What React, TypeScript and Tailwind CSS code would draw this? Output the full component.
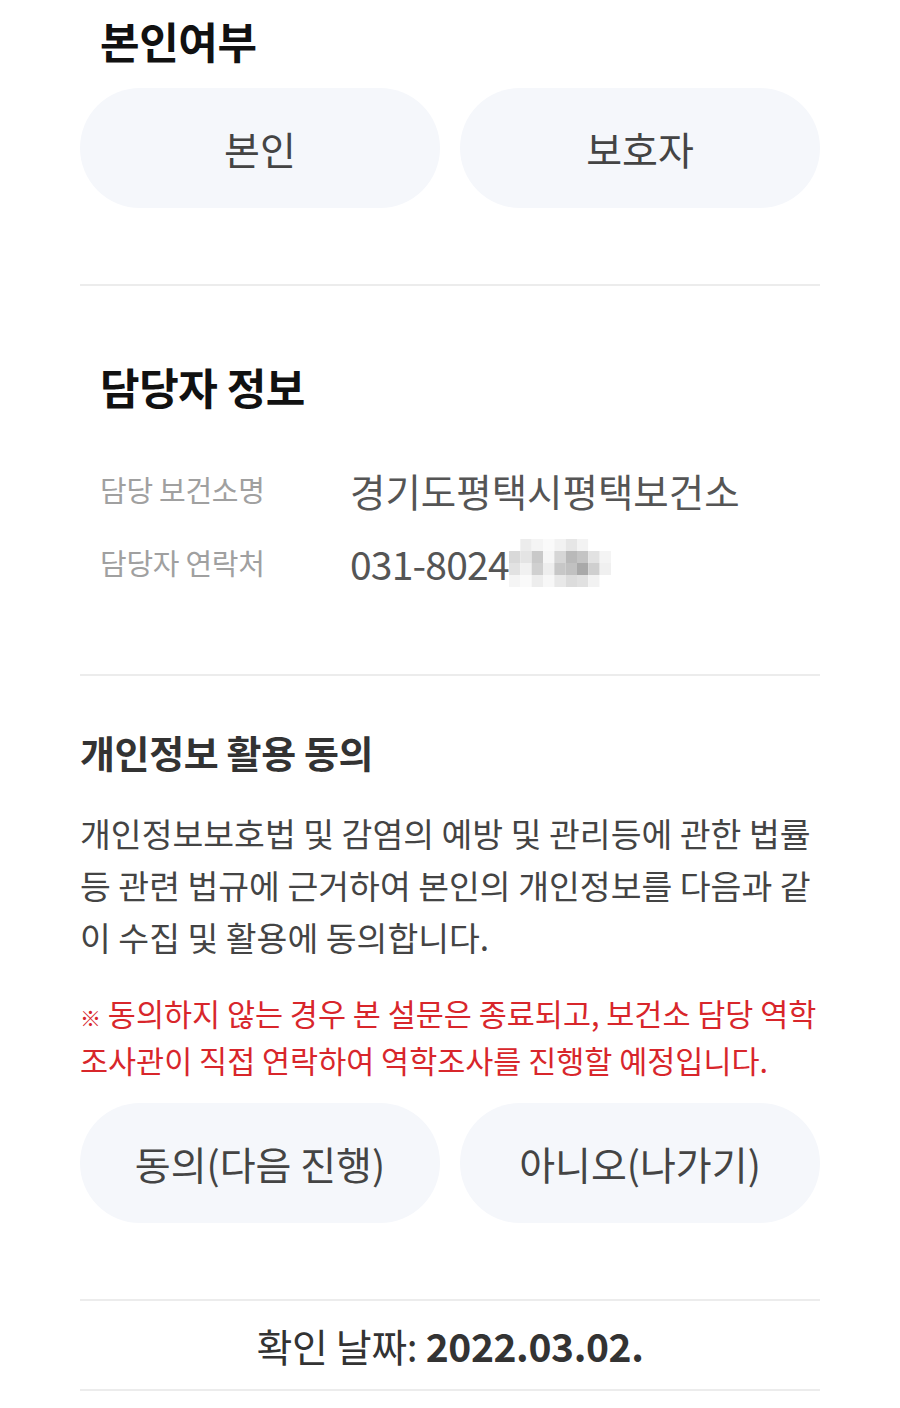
import React from 'react';

const font = { fontFamily: '"Noto Sans CJK KR", "Noto Sans", sans-serif' };

// pixelated mosaic that hides the last digits of the phone number
const mosaic: string[][] = [
  ['#ffffff', '#ececec', '#f4f4f4', '#fafafa', '#f2f2f2', '#e6e6e6', '#f3f3f3', '#ffffff', '#ffffff'],
  ['#d9d9d9', '#e4e4e4', '#c9c9c9', '#f6f6f6', '#d6d6d6', '#b9b9b9', '#c4c4c4', '#e2e2e2', '#f4f4f4'],
  ['#e2e2e2', '#f1f1f1', '#d0d0d0', '#eeeeee', '#c7c7c7', '#c1c1c1', '#a9a9a9', '#cfcfcf', '#f0f0f0'],
  ['#f5f5f5', '#fafafa', '#ededed', '#f7f7f7', '#e8e8e8', '#dcdcdc', '#e1e1e1', '#f2f2f2', '#ffffff'],
];

function Mosaic() {
  return (
    <svg width="102" height="48" viewBox="0 0 108 48" preserveAspectRatio="none">
      {mosaic.map((row, r) =>
        row.map((c, i) => <rect key={`${r}-${i}`} x={i * 12} y={r * 12} width="12" height="12" fill={c} />),
      )}
    </svg>
  );
}

function PillButton({ children }: { children: React.ReactNode }) {
  return (
    <button className="h-[120px] flex-1 rounded-full bg-[#f5f7fb] text-[39px] text-[#444444]">
      {children}
    </button>
  );
}

function Divider() {
  return <div className="h-[2px] w-full bg-[#ececec]" />;
}

export default function App() {
  return (
    <div className="min-h-screen bg-white px-[80px] pt-4" style={font}>
      <h2 className="pl-5 text-[43px] font-bold leading-[48px] tracking-[-0.01em] text-[#111111]">본인여부</h2>
      <div className="mt-6 flex gap-5">
        <PillButton>본인</PillButton>
        <PillButton>보호자</PillButton>
      </div>

      <div className="mt-[76px]">
        <Divider />
      </div>

      <h2 className="mt-[76px] pl-5 text-[43px] font-bold leading-[48px] tracking-[-0.01em] text-[#111111]">
        담당자 정보
      </h2>

      <div className="mt-[56px] flex flex-col gap-[25px] pl-5">
        <div className="flex items-center">
          <span className="w-[250px] text-[29px] tracking-[-0.01em] text-[#a0a0a0]">담당 보건소명</span>
          <span className="text-[38.5px] leading-[48px] text-[#555555]">경기도평택시평택보건소</span>
        </div>
        <div className="flex items-center">
          <span className="w-[250px] text-[29px] tracking-[-0.01em] text-[#a0a0a0]">담당자 연락처</span>
          <span className="flex items-center text-[39px] leading-[48px] tracking-[-0.02em] text-[#555555]">
            031-8024
            <Mosaic />
          </span>
        </div>
      </div>

      <div className="mt-[87px]">
        <Divider />
      </div>

      <h3 className="mt-[54px] text-[38px] font-bold leading-[44px] tracking-[-0.01em] text-[#333333]">
        개인정보 활용 동의
      </h3>
      <p className="mt-[33px] text-[33.5px] leading-[52px] text-[#444444]">
        개인정보보호법 및 감염의 예방 및 관리등에 관한 법률
        <br />
        등 관련 법규에 근거하여 본인의 개인정보를 다음과 같
        <br />이 수집 및 활용에 동의합니다.
      </p>
      <p className="mt-[27px] whitespace-nowrap text-[30.5px] leading-[47px] text-[#d8262b]">
        <span className="text-[21px] leading-none">※</span> 동의하지 않는 경우 본 설문은 종료되고, 보건소 담당 역학
        <br />
        조사관이 직접 연락하여 역학조사를 진행할 예정입니다.
      </p>

      <div className="mt-[19px] flex gap-5">
        <PillButton>동의(다음 진행)</PillButton>
        <PillButton>아니오(나가기)</PillButton>
      </div>

      <div className="mt-[76px]">
        <Divider />
      </div>
      <div className="flex h-[88px] items-center justify-center text-[39px] tracking-[-0.01em] text-[#333333]">
        확인 날짜:&nbsp;<span className="font-bold">2022.03.02.</span>
      </div>
      <Divider />
    </div>
  );
}
